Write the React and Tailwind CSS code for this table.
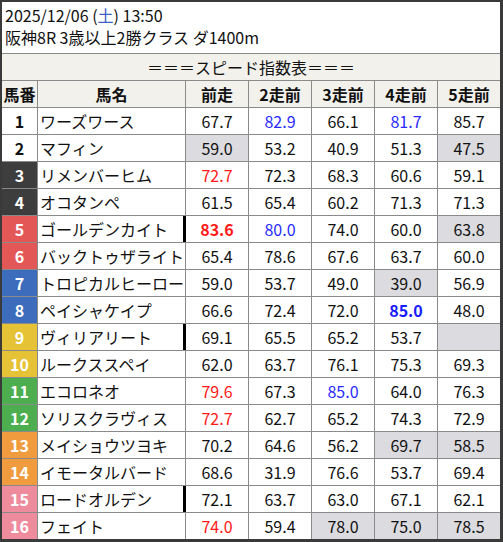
import React from "react";

const NUM_BG = {
  1: "bg-white text-[#111]",
  2: "bg-white text-[#111]",
  3: "bg-[#3d3d3d] text-white",
  4: "bg-[#3d3d3d] text-white",
  5: "bg-[#e35757] text-white",
  6: "bg-[#e35757] text-white",
  7: "bg-[#3d6cbc] text-white",
  8: "bg-[#3d6cbc] text-white",
  9: "bg-[#e6c236] text-white",
  10: "bg-[#e6c236] text-white",
  11: "bg-[#4cae4f] text-white",
  12: "bg-[#4cae4f] text-white",
  13: "bg-[#ef9b3e] text-white",
  14: "bg-[#ef9b3e] text-white",
  15: "bg-[#ee8c9e] text-white",
  16: "bg-[#ee8c9e] text-white",
};

// [value, style] style: n normal, r red, b blue, rb red bold, bb blue bold, g gray bg
const rows = [
  [1, "ワーズワース", false, [["67.7"], ["82.9", "b"], ["66.1"], ["81.7", "b"], ["85.7"]]],
  [2, "マフィン", false, [["59.0", "g"], ["53.2"], ["40.9"], ["51.3"], ["47.5", "g"]]],
  [3, "リメンバーヒム", false, [["72.7", "r"], ["72.3"], ["68.3"], ["60.6"], ["59.1"]]],
  [4, "オコタンペ", false, [["61.5"], ["65.4"], ["60.2"], ["71.3"], ["71.3"]]],
  [5, "ゴールデンカイト", true, [["83.6", "rb"], ["80.0", "b"], ["74.0"], ["60.0"], ["63.8", "g"]]],
  [6, "バックトゥザライト", false, [["65.4"], ["78.6"], ["67.6"], ["63.7"], ["60.0"]]],
  [7, "トロピカルヒーロー", false, [["59.0"], ["53.7"], ["49.0"], ["39.0", "g"], ["56.9"]]],
  [8, "ペイシャケイプ", false, [["66.6"], ["72.4"], ["72.0"], ["85.0", "bb"], ["48.0"]]],
  [9, "ヴィリアリート", true, [["69.1"], ["65.5"], ["65.2"], ["53.7"], ["", "g"]]],
  [10, "ルークススペイ", false, [["62.0"], ["63.7"], ["76.1"], ["75.3"], ["69.3"]]],
  [11, "エコロネオ", false, [["79.6", "r"], ["67.3"], ["85.0", "b"], ["64.0"], ["76.3"]]],
  [12, "ソリスクラヴィス", false, [["72.7", "r"], ["62.7"], ["65.2"], ["74.3"], ["72.9"]]],
  [13, "メイショウツヨキ", false, [["70.2"], ["64.6"], ["56.2"], ["69.7", "g"], ["58.5", "g"]]],
  [14, "イモータルバード", false, [["68.6"], ["31.9"], ["76.6"], ["53.7"], ["69.4"]]],
  [15, "ロードオルデン", true, [["72.1"], ["63.7"], ["63.0"], ["67.1"], ["62.1"]]],
  [16, "フェイト", false, [["74.0", "r"], ["59.4"], ["78.0", "g"], ["75.0", "g"], ["78.5", "g"]]],
];

function styleFor(s) {
  switch (s) {
    case "r":
      return "text-[#ff1a1a]";
    case "rb":
      return "text-[#ff1a1a] font-bold";
    case "b":
      return "text-[#2a2aff]";
    case "bb":
      return "text-[#1a1aff] font-bold";
    case "g":
      return "bg-[#dcdce0] text-[#111]";
    default:
      return "text-[#111]";
  }
}

const headers = ["前走", "2走前", "3走前", "4走前", "5走前"];

export default function App() {
  return (
    <div
      className="w-[503px] h-[542px] bg-white border-t-2 border-l-2 border-r-[3px] border-b-[3px] border-[#3a3a3a] text-[16px] text-[#111] overflow-hidden"
      style={{ fontFamily: '"Noto Sans CJK JP", "Noto Sans", sans-serif' }}
    >
      <div className="h-[51px] pl-[3px] pt-[2px] flex flex-col leading-[22px]">
        <div>
          2025/12/06 (<span className="text-[#3d5fc4]">土</span>) 13:50
        </div>
        <div>阪神8R 3歳以上2勝クラス ダ1400m</div>
      </div>
      <div className="h-[27px] border-t border-[#8a8a8a] bg-[#f2f1ec] flex items-center justify-center">
        ＝＝＝スピード指数表＝＝＝
      </div>
      <div className="h-[27px] border-t border-[#8a8a8a] bg-[#f2f1ec] flex font-bold">
        <div className="w-[35px] flex items-center justify-center">馬番</div>
        <div className="w-[148px] border-l border-[#8a8a8a] flex items-center justify-center">馬名</div>
        {headers.map((h) => (
          <div key={h} className="w-[63px] border-l border-[#8a8a8a] flex items-center justify-center">
            {h}
          </div>
        ))}
      </div>
      {rows.map(([num, name, bar, vals]) => (
        <div key={num} className="h-[27px] border-t border-[#8a8a8a] flex">
          <div className={`w-[35px] flex items-center justify-center font-bold ${NUM_BG[num]}`}>{num}</div>
          <div className="w-[148px] border-l border-[#8a8a8a] flex items-center pl-[2px] whitespace-nowrap overflow-hidden">
            {name}
          </div>
          {vals.map(([v, s], i) => (
            <div
              key={i}
              className={`w-[63px] flex items-center justify-center ${
                i === 0 && bar ? "border-l-[3px] border-black -ml-[2px] w-[65px]" : "border-l border-[#8a8a8a]"
              } ${styleFor(s)}`}
            >
              {v}
            </div>
          ))}
        </div>
      ))}
    </div>
  );
}
